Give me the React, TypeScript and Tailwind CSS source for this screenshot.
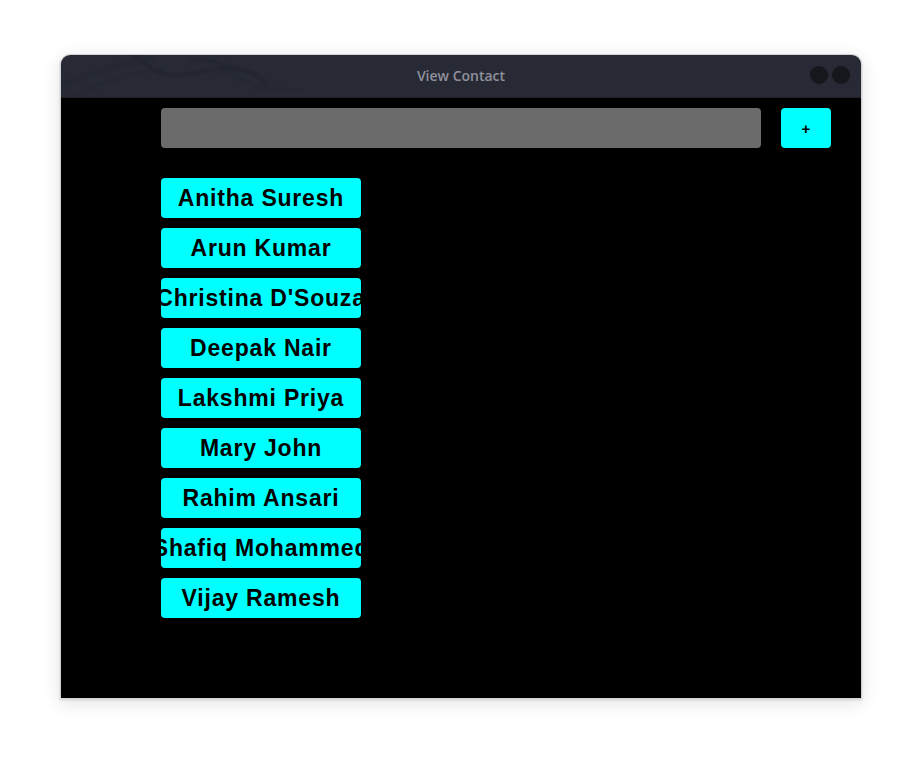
const contacts = [
  "Anitha Suresh",
  "Arun Kumar",
  "Christina D'Souza",
  "Deepak Nair",
  "Lakshmi Priya",
  "Mary John",
  "Rahim Ansari",
  "Shafiq Mohammed",
  "Vijay Ramesh",
];

function Dragon() {
  return (
    <svg
      className="absolute left-0 top-0"
      width="260"
      height="42"
      viewBox="0 0 260 42"
      fill="none"
    >
      <path d="M0 30 C40 15 70 6 90 4" stroke="#252833" strokeWidth="6" strokeLinecap="round" />
      <path d="M10 42 C40 28 70 18 100 14" stroke="#252833" strokeWidth="4" strokeLinecap="round" />
      <path d="M75 2 C90 14 100 22 120 20 C140 18 160 10 180 14 C195 17 200 24 205 30" stroke="#232631" strokeWidth="5" strokeLinecap="round" />
      <path d="M130 6 C145 2 160 8 172 14" stroke="#232631" strokeWidth="3" strokeLinecap="round" />
      <path d="M150 14 C170 18 185 26 200 34 L240 36" stroke="#252833" strokeWidth="4" strokeLinecap="round" />
    </svg>
  );
}

export default function App() {
  return (
    <div className="w-[922px] h-[765px] bg-white pt-[54px] pl-[60px]">
      <div className="w-[802px] rounded-t-[10px] border border-[#d2d2d2] shadow-[0_1px_0_1px_rgba(0,0,0,0.06),0_4px_18px_rgba(0,0,0,0.12)] overflow-hidden">
        <div className="relative h-[43px] bg-[#272a35] border-b border-[#1f2129] flex items-center justify-center pb-[2px]">
          <Dragon />
          <span className="relative text-[14px] font-semibold text-[#8f919a] font-['Open_Sans',sans-serif]">
            View Contact
          </span>
          <div className="absolute right-[11px] top-[11px] flex gap-[4px]">
            <span className="w-[18px] h-[18px] rounded-full bg-[#16171c]" />
            <span className="w-[18px] h-[18px] rounded-full bg-[#16171c]" />
          </div>
        </div>
        <div className="h-[600px] bg-black pl-[100px] pt-[10px] font-['Liberation_Sans',Arial,sans-serif]">
          <div className="flex gap-[20px]">
            <div className="w-[600px] h-[40px] rounded-[4px] bg-[#6b6b6b]" />
            <button className="w-[50px] h-[40px] rounded-[4px] bg-[#00ffff] text-black text-[15px] font-bold pt-[3px]">
              +
            </button>
          </div>
          <div className="mt-[30px] flex flex-col gap-[10px]">
            {contacts.map((name) => (
              <button
                key={name}
                className="w-[200px] h-[40px] rounded-[4px] bg-[#00ffff] text-black text-[23px] font-bold tracking-[0.8px] pt-[1px] flex items-center justify-center overflow-hidden whitespace-nowrap"
              >
                {name}
              </button>
            ))}
          </div>
        </div>
      </div>
    </div>
  );
}
